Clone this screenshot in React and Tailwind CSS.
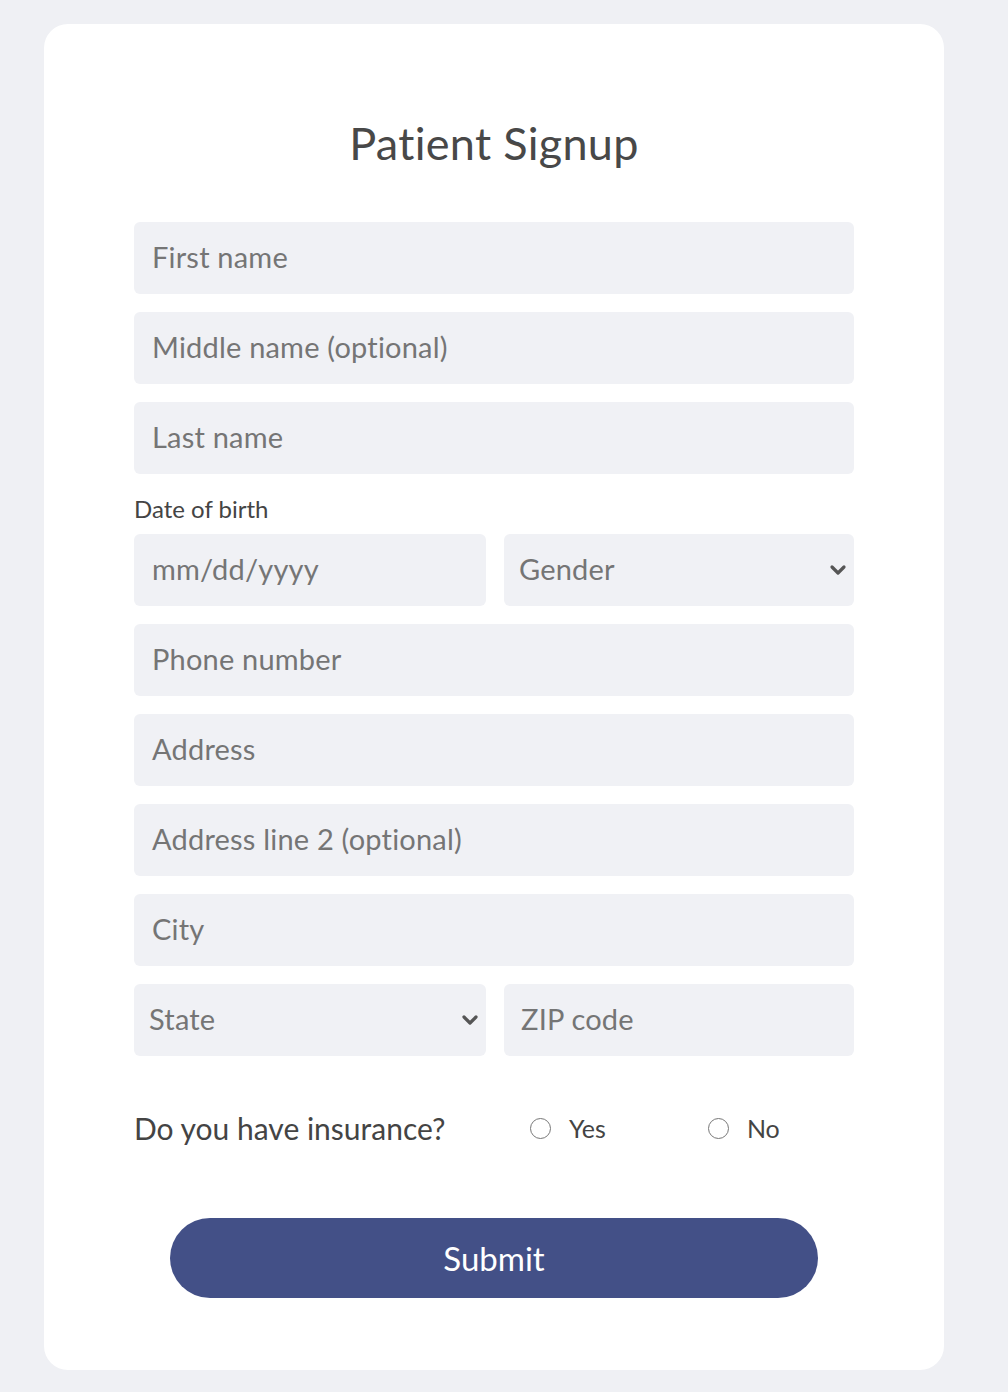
import React from "react";

const font = { fontFamily: "Lato, 'Noto Sans', sans-serif" };

function Field({ placeholder, className = "" }) {
  return (
    <div className={`h-[72px] rounded-[6px] bg-[#f0f1f5] flex items-center px-[18px] pb-[3px] ${className}`}>
      <span className="text-[29px] text-[#757575] leading-none tracking-[0.2px]">{placeholder}</span>
    </div>
  );
}

function Select({ placeholder, className = "" }) {
  return (
    <div className={`h-[72px] rounded-[6px] bg-[#f0f1f5] flex items-center justify-between pl-[15px] pr-[6px] ${className}`}>
      <span className="text-[29px] text-[#757575] leading-none tracking-[0.2px] pb-[3px]">{placeholder}</span>
      <svg width="20" height="14" viewBox="0 0 20 14" fill="none">
        <path d="M4 4 L10 10 L16 4" stroke="#555" strokeWidth="3.2" strokeLinecap="round" strokeLinejoin="round" />
      </svg>
    </div>
  );
}

function Radio({ label }) {
  return (
    <div className="flex items-center gap-[18px]">
      <span className="w-[21px] h-[21px] rounded-full border-[1.5px] border-[#777] bg-white" />
      <span className="text-[25px] text-[#444] leading-none">{label}</span>
    </div>
  );
}

export default function App() {
  return (
    <div className="min-h-[1392px] w-full bg-[#eff0f4] pt-[24px] pl-[44px]" style={font}>
      <div className="w-[900px] h-[1346px] bg-white rounded-[24px] flex flex-col items-center pt-[94px]">
        <h1 className="text-[45px] leading-[50px] text-[#484848] font-normal tracking-[0.3px]">Patient Signup</h1>
        <div className="w-[720px] mt-[54px] flex flex-col">
          <div className="flex flex-col gap-[18px]">
            <Field placeholder="First name" />
            <Field placeholder="Middle name (optional)" />
            <Field placeholder="Last name" />
          </div>
          <div className="mt-[20px] mb-[10px] text-[24px] leading-[30px] text-[#444]">Date of birth</div>
          <div className="flex flex-col gap-[18px]">
            <div className="flex gap-[18px]">
              <Field placeholder="mm/dd/yyyy" className="w-[352px]" />
              <Select placeholder="Gender" className="flex-1" />
            </div>
            <Field placeholder="Phone number" />
            <Field placeholder="Address" />
            <Field placeholder="Address line 2 (optional)" />
            <Field placeholder="City" />
            <div className="flex gap-[18px]">
              <Select placeholder="State" className="w-[352px]" />
              <Field placeholder="ZIP code" className="flex-1 pl-[17px]" />
            </div>
          </div>
          <div className="mt-[54px] flex items-center h-[36px]">
            <span className="text-[30px] text-[#444] leading-none w-[396px]">Do you have insurance?</span>
            <Radio label="Yes" />
            <div className="w-[102px]" />
            <Radio label="No" />
          </div>
        </div>
        <button className="mt-[72px] w-[648px] h-[80px] rounded-full bg-[#435087] text-white text-[33px] leading-none">
          Submit
        </button>
      </div>
    </div>
  );
}
